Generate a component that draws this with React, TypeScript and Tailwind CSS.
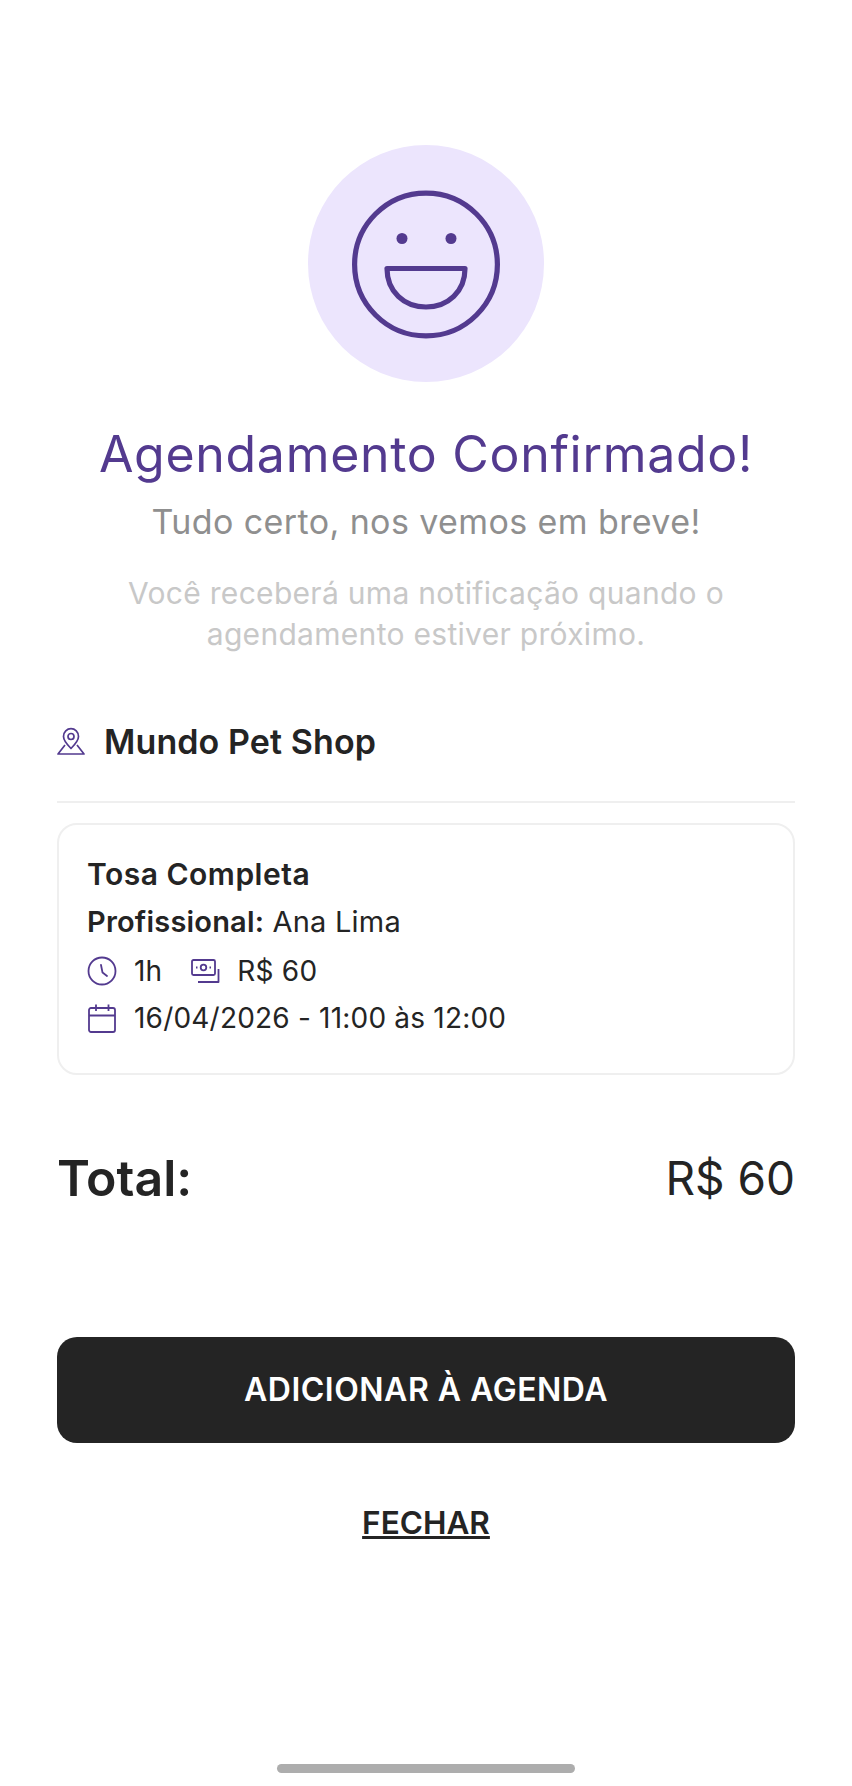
import React from 'react';

const PURPLE = '#533a8f';

const SmileIcon = () => (
  <svg viewBox="0 -0.5 150 150" className="w-[150px] h-[150px]" fill="none" stroke="#533a8f" strokeWidth="5.2">
    <circle cx="75" cy="75" r="71.4" />
    <circle cx="51" cy="49" r="5.5" fill="#533a8f" stroke="none" />
    <circle cx="100" cy="49" r="5.5" fill="#533a8f" stroke="none" />
    <path d="M36 79H114C114 102 97 117.500 75 117.500C53 117.500 36 102 36 79Z" strokeLinejoin="round" />
  </svg>
);

const PinIcon = () => (
  <svg viewBox="0 0 30 30" className="w-[30px] h-[30px] -ml-[1px]" fill="none" stroke={PURPLE} strokeWidth="1.7" strokeLinejoin="round">
    <path d="M15 22.500C11 18.500 7.500 15 7.500 10.500C7.500 6 11 2.700 15 2.700C19 2.700 22.500 6 22.500 10.500C22.500 15 19 18.500 15 22.500Z" />
    <circle cx="15" cy="10.500" r="3" />
    <path d="M9 19L2 28H28L21 19" />
  </svg>
);

const ClockIcon = () => (
  <svg viewBox="0 0 30 30" className="w-[30px] h-[30px]" fill="none" stroke={PURPLE} strokeWidth="1.8" strokeLinecap="round">
    <circle cx="15" cy="15" r="13.500" />
    <path d="M14 9L15.500 16.500L20 20" />
  </svg>
);

const MoneyIcon = () => (
  <svg viewBox="0 0 30 30" className="w-[30px] h-[30px]" fill="none" stroke={PURPLE} strokeWidth="1.8" strokeLinejoin="round">
    <rect x="2" y="4" width="23" height="15" rx="1.500" />
    <circle cx="13.500" cy="11.500" r="2.800" />
    <path d="M6 11.500H7.500M19.500 11.500H21" />
    <path d="M28.500 13V26H8" />
  </svg>
);

const CalendarIcon = () => (
  <svg viewBox="0 0 30 30" className="w-[30px] h-[30px]" fill="none" stroke={PURPLE} strokeWidth="1.8" strokeLinejoin="round">
    <rect x="2" y="5" width="26" height="24" rx="2" />
    <path d="M2 12.500H28M9 1.500V8M21.500 1.500V8M9 5H21.500" />
  </svg>
);

export default function App() {
  return (
    <div
      className="w-[852px] h-[1786px] bg-white flex flex-col items-center pt-[145px] text-[#242424] relative"
      style={{ fontFamily: "Inter, 'Noto Sans', sans-serif" }}
    >
      <div className="w-[236px] h-[237px] rounded-full bg-[#ece5fd] flex items-center justify-center">
        <SmileIcon />
      </div>

      <h1 className="mt-[43px] text-[50px] leading-[58px] font-normal tracking-[0.7px] text-[#533a8f] whitespace-nowrap">Agendamento Confirmado!</h1>
      <p className="mt-[16px] text-[34px] leading-[46px] tracking-[0.4px] text-[#8f8f8f]">Tudo certo, nos vemos em breve!</p>
      <p className="mt-[28px] text-[30px] leading-[41px] tracking-[0.3px] text-[#c8c8c8] text-center w-[680px]">
        Você receberá uma notificação quando o agendamento estiver próximo.
      </p>

      <div className="w-[738px] mt-[56px]">
        <div className="flex items-center gap-[18px] h-[60px] py-[2px]">
          <PinIcon />
          <span className="text-[34px] font-semibold tracking-[0.1px]">Mundo Pet Shop</span>
        </div>
        <div className="mt-[30px] h-[2px] bg-[#efefef]" />

        <div className="mt-[20px] h-[252px] border-2 border-[#efefef] rounded-[20px] pl-[28px] pt-[27px]">
          <div className="text-[30px] leading-[44px] font-semibold tracking-[0.5px]">Tosa Completa</div>
          <div className="mt-[4px] text-[29px] leading-[44px] tracking-[0.2px]"><span className="font-semibold">Profissional:</span> Ana Lima</div>
          <div className="mt-[5px] flex items-center h-[44px] text-[28px] tracking-[0.2px]">
            <ClockIcon />
            <span className="ml-[17px]">1h</span>
            <span className="ml-[28px]"><MoneyIcon /></span>
            <span className="ml-[17px]">R$ 60</span>
          </div>
          <div className="mt-[3px] flex items-center h-[44px] text-[28px] tracking-[0.2px]">
            <CalendarIcon />
            <span className="ml-[17px]">16/04/2026 - 11:00 às 12:00</span>
          </div>
        </div>

        <div className="mt-[73px] flex items-center justify-between">
          <span className="text-[50px] leading-[60px] font-semibold">Total:</span>
          <span className="text-[46px] leading-[60px]">R$ 60</span>
        </div>

        <button className="mt-[129px] w-full h-[106px] rounded-[20px] bg-[#242424] text-white text-[32px] font-semibold tracking-[0.5px]">
          ADICIONAR À AGENDA
        </button>

        <div className="mt-[57px] text-center">
          <span className="text-[31.5px] leading-[46px] font-semibold underline">FECHAR</span>
        </div>
      </div>

      <div className="absolute bottom-[13px] left-[277px] w-[298px] h-[9px] rounded-full bg-[#adadad]" />
    </div>
  );
}
